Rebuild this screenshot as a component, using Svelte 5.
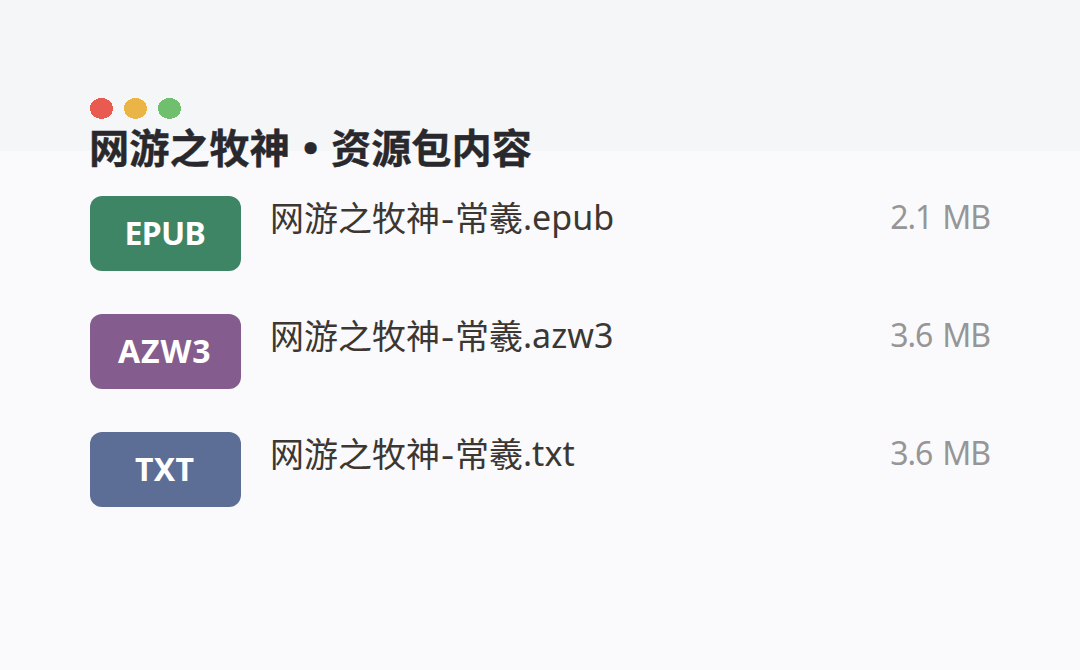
<script>
  const files = [
    { type: 'EPUB', ext: '.epub', size: '2.1 MB', color: '#3d8565', track: -0.7 },
    { type: 'AZW3', ext: '.azw3', size: '3.6 MB', color: '#845c8d', track: 0.9 },
    { type: 'TXT', ext: '.txt', size: '3.6 MB', color: '#5c6e96', track: 0.3 }
  ];
</script>

<main>
  <header>
    <svg class="dots" width="92" height="22" viewBox="0 0 92 22" shape-rendering="crispEdges">
      <ellipse cx="11.5" cy="10.5" rx="11.5" ry="10.5" fill="#e95b50" />
      <ellipse cx="45.5" cy="10.5" rx="11.5" ry="10.5" fill="#ebb446" />
      <ellipse cx="79.5" cy="10.5" rx="11.5" ry="10.5" fill="#6fbf6f" />
    </svg>
    <h1><span>网游之牧神</span><span class="bullet">•</span><span>资源包内容</span></h1>
  </header>
  <ul>
    {#each files as f}
      <li>
        <span class="badge" style="background:{f.color};letter-spacing:{f.track}px">{f.type}</span>
        <span class="name">网游之牧神<span class="dash">-</span>常羲<span class="ext">{f.ext}</span></span>
        <span class="size">{f.size}</span>
      </li>
    {/each}
  </ul>
</main>

<style>
  main {
    box-sizing: border-box;
    width: 1080px;
    height: 670px;
    padding: 98px 90px 0;
    background: linear-gradient(#f5f6f8 0 151px, #fafafc 151px);
    font-family: "Noto Sans", "Noto Sans CJK SC", sans-serif;
    overflow: hidden;
  }
  header { height: 98px; }
  .dots { display: block; }
  h1 {
    margin: -1px 0 0 -1px;
    display: flex;
    height: 58px;
    font-size: 40.2px;
    line-height: 58px;
    font-weight: 700;
    color: #28282d;
    white-space: nowrap;
  }
  h1 span { -webkit-text-stroke: 0.4px #28282d; }
  h1 .bullet {
    width: 41px;
    text-align: center;
    font-size: 38px;
    transform: translateY(-1px) scaleX(1.1);
  }
  ul { list-style: none; margin: 0; padding: 0; display: grid; gap: 43px; }
  li { display: flex; height: 75px; align-items: flex-start; white-space: nowrap; }
  .badge {
    box-sizing: border-box;
    width: 151px;
    height: 75px;
    padding-right: 1.5px;
    border-radius: 12px;
    color: #fff;
    font-size: 32px;
    font-weight: 700;
    line-height: 73px;
    text-align: center;
  }
  .name {
    margin-left: 29px;
    font-size: 34px;
    line-height: 44px;
    color: #3c3732;
  }
  .dash { display: inline-block; margin: 0 2px; transform: scaleX(1.2); }
  .ext { letter-spacing: 0.05px; position: relative; top: -1px; }
  .size {
    margin-left: auto;
    font-size: 32px;
    line-height: 42px;
    letter-spacing: -1.1px;
    word-spacing: 3px;
    color: #969696;
  }
</style>
